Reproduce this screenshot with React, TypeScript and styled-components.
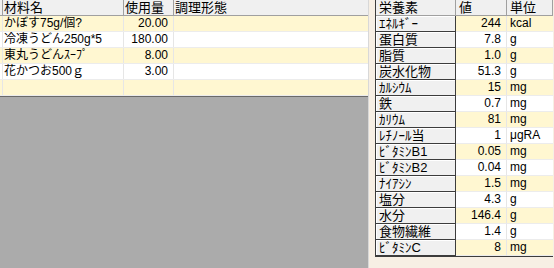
import React from "react";
import styled, { createGlobalStyle } from "styled-components";

const GlobalStyle = createGlobalStyle`
  html, body {
    margin: 0;
    padding: 0;
    background: #f7efe4;
  }
  body {
    font-family: "Liberation Sans", "Noto Sans CJK JP", sans-serif;
    font-size: 12px;
    color: #000;
  }
`;

const CREAM = "#fff7d1";

const Window = styled.div`
  display: flex;
  width: 554px;
  height: 268px;
  overflow: hidden;
`;

const LeftPane = styled.div`
  width: 368px;
  display: flex;
  flex-direction: column;
  background: #ababab;
  border-right: 1px solid #d8d8d8;
`;

const Ingredients = styled.div`
  background: #fff;
  border-bottom: 1px solid #6a6a6a;
`;

const IngRow = styled.div<{ $head?: boolean; $alt?: boolean }>`
  display: grid;
  grid-template-columns: 3px 121px 50px 1fr;
  height: 16px;
  box-sizing: border-box;
  background: ${(p) => (p.$head ? "#f0f0f0" : p.$alt ? CREAM : "#fff")};
  border-bottom: 1px solid ${(p) => (p.$head ? "#a0a0a0" : "#ececec")};
`;

const IngCell = styled.div<{ $head?: boolean; $right?: boolean }>`
  box-sizing: border-box;
  line-height: 15px;
  padding: ${(p) => (p.$right ? "0 5px 0 0" : "0 0 0 1px")};
  text-align: ${(p) => (p.$right ? "right" : "left")};
  font-size: ${(p) => (p.$head ? "13px" : "12px")};
  border-right: 1px solid ${(p) => (p.$head ? "#a0a0a0" : "#e6e6e6")};
  white-space: nowrap;
  &:last-child {
    border-right: none;
  }
`;

const RightPane = styled.div`
  flex: 1;
  background: #f7efe4;
  padding-left: 6px;
`;

const Nutrients = styled.div`
  width: 177px;
  border-left: 1px solid #3c3c3c;
  border-bottom: 1px solid #3c3c3c;
  background: #fff;
`;

const NutRow = styled.div<{ $alt?: boolean }>`
  display: grid;
  grid-template-columns: 80px 51px 46px;
  height: 16px;
  box-sizing: border-box;
  background: ${(p) => (p.$alt ? CREAM : "#fff")};
`;

const NameCell = styled.div`
  box-sizing: border-box;
  background: #f0f0f0;
  border-right: 1px solid #3c3c3c;
  border-bottom: 1px solid #3c3c3c;
  box-shadow: inset 1px 1px 0 #fff;
  padding-left: 3px;
  line-height: 15px;
  font-size: 13px;
  white-space: nowrap;
`;

const HeadCell = styled.div`
  box-sizing: border-box;
  background: #f0f0f0;
  border-right: 1px solid #a0a0a0;
  border-bottom: 1px solid #a0a0a0;
  padding-left: 3px;
  line-height: 15px;
  font-size: 13px;
  white-space: nowrap;
`;

const ValueCell = styled.div`
  box-sizing: border-box;
  border-right: 1px solid #e6e6e6;
  border-bottom: 1px solid #ececec;
  padding-right: 5px;
  text-align: right;
  line-height: 15px;
`;

const UnitCell = styled.div`
  box-sizing: border-box;
  border-bottom: 1px solid #ececec;
  padding-left: 3px;
  line-height: 15px;
`;

const ingredients = [
  { name: "かぼす75g/個?", qty: "20.00", how: "" },
  { name: "冷凍うどん250g*5", qty: "180.00", how: "" },
  { name: "東丸うどんｽｰﾌﾟ", qty: "8.00", how: "" },
  { name: "花かつお500ｇ", qty: "3.00", how: "" },
  { name: "", qty: "", how: "" },
];

const nutrients = [
  ["ｴﾈﾙｷﾞｰ", "244", "kcal"],
  ["蛋白質", "7.8", "g"],
  ["脂質", "1.0", "g"],
  ["炭水化物", "51.3", "g"],
  ["ｶﾙｼｳﾑ", "15", "mg"],
  ["鉄", "0.7", "mg"],
  ["ｶﾘｳﾑ", "81", "mg"],
  ["ﾚﾁﾉｰﾙ当", "1", "μgRA"],
  ["ﾋﾞﾀﾐﾝB1", "0.05", "mg"],
  ["ﾋﾞﾀﾐﾝB2", "0.04", "mg"],
  ["ﾅｲｱｼﾝ", "1.5", "mg"],
  ["塩分", "4.3", "g"],
  ["水分", "146.4", "g"],
  ["食物繊維", "1.4", "g"],
  ["ﾋﾞﾀﾐﾝC", "8", "mg"],
];

export default function App() {
  return (
    <>
      <GlobalStyle />
      <Window>
        <LeftPane>
          <Ingredients>
            <IngRow $head>
              <IngCell $head />
              <IngCell $head>材料名</IngCell>
              <IngCell $head>使用量</IngCell>
              <IngCell $head>調理形態</IngCell>
            </IngRow>
            {ingredients.map((row, i) => (
              <IngRow key={i} $alt={i % 2 === 0}>
                <IngCell />
                <IngCell>{row.name}</IngCell>
                <IngCell $right>{row.qty}</IngCell>
                <IngCell>{row.how}</IngCell>
              </IngRow>
            ))}
          </Ingredients>
        </LeftPane>
        <RightPane>
          <Nutrients>
            <NutRow>
              <HeadCell>栄養素</HeadCell>
              <HeadCell>値</HeadCell>
              <HeadCell>単位</HeadCell>
            </NutRow>
            {nutrients.map(([name, value, unit], i) => (
              <NutRow key={name} $alt={i % 2 === 0}>
                <NameCell>{name}</NameCell>
                <ValueCell>{value}</ValueCell>
                <UnitCell>{unit}</UnitCell>
              </NutRow>
            ))}
          </Nutrients>
        </RightPane>
      </Window>
    </>
  );
}
